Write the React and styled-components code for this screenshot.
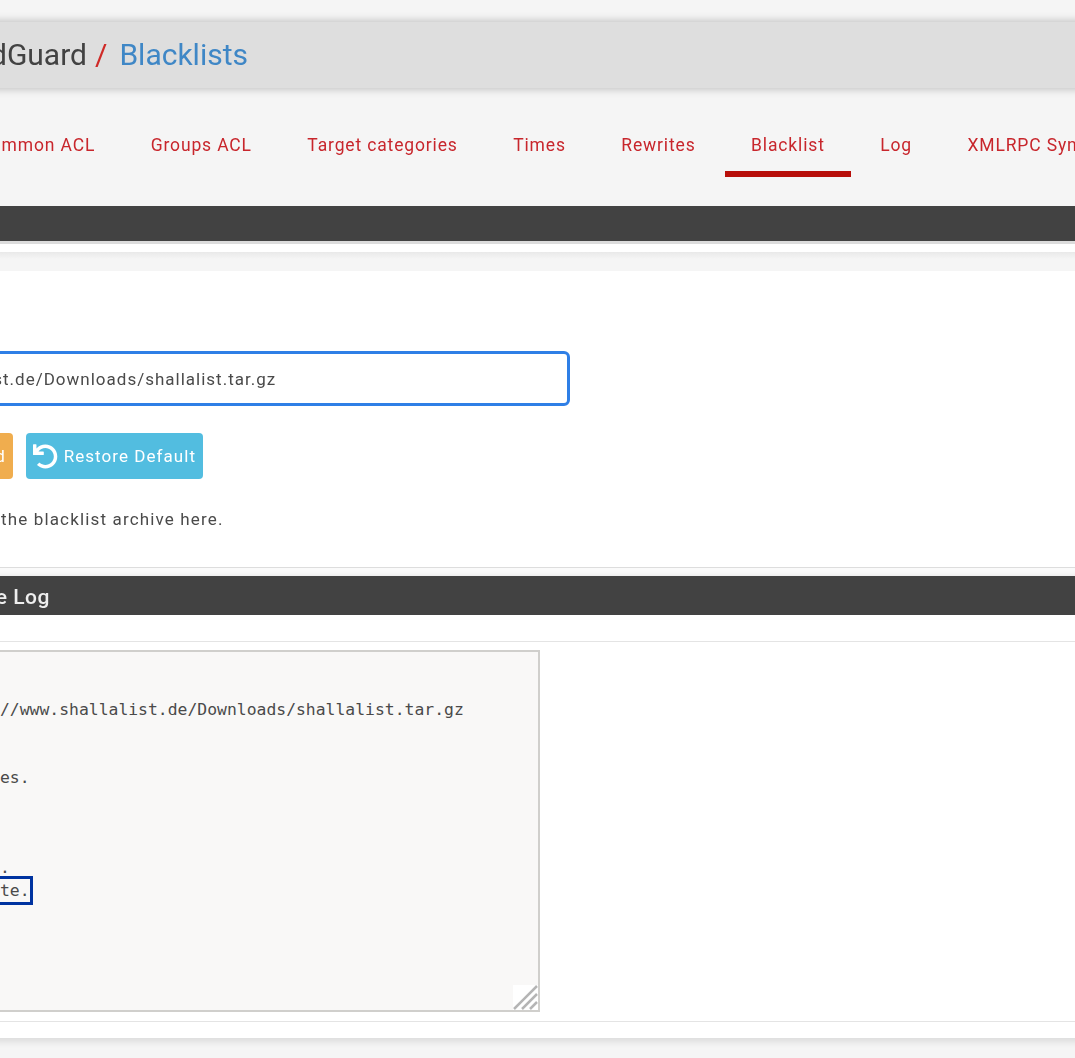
import React from "react";
import styled, { createGlobalStyle } from "styled-components";
import { FaUndo, FaDownload } from "react-icons/fa";

const tabs = [
  "General settings",
  "Common ACL",
  "Groups ACL",
  "Target categories",
  "Times",
  "Rewrites",
  "Blacklist",
  "Log",
  "XMLRPC Sync",
];

const logLines = [
  "",
  "Begin blacklist update",
  "Download archive: http://www.shallalist.de/Downloads/shallalist.tar.gz",
  "Download complete",
  "Unpack archive",
  "Scan blacklist categories.",
  "Found 74 items",
  "Start rebuild DB",
  "Copy DB to workdir",
  "Reload the proxy server.",
];

function App() {
  return (
    <>
      <GlobalStyle />
      <Page>
        <Breadcrumb>
          <CrumbPath>Package / Proxy filter SquidGuard</CrumbPath>
          <Slash>/</Slash>
          <CrumbLink>Blacklists</CrumbLink>
        </Breadcrumb>

        <TabBar>
          {tabs.map((t) => (
            <Tab key={t} $active={t === "Blacklist"}>
              {t}
            </Tab>
          ))}
        </TabBar>

        <DarkBar />
        <Strip />

        <FormBody>
          <UrlInput readOnly value="http://www.shallalist.de/Downloads/shallalist.tar.gz" />
          <Buttons>
            <ActionButton $bg="#f0ad4e" $width="209px">
              <FaDownload size={20} />
              Download
            </ActionButton>
            <ActionButton $bg="#52bde0" $width="177px">
              <FaUndo size={25} />
              Restore Default
            </ActionButton>
          </Buttons>
          <HelpText>Enter FTP/HTTP path to the blacklist archive here.</HelpText>
        </FormBody>

        <Gap />
        <LogHeading>Blacklist Update Log</LogHeading>

        <LogBody>
          <LogInner>
            <LogBox>
              {logLines.map((l, i) => (
                <LogLine key={"log" + i}>{l}</LogLine>
              ))}
              <LogLine>
                <Highlight>Blacklist update complete.</Highlight>
              </LogLine>
              <Grip viewBox="0 0 25 25">
                <rect width="25" height="25" fill="#fff" />
                <path d="M1 24L24 1M9 24L24 9M17 24L24 17" stroke="#b5b5b5" strokeWidth="2.5" fill="none" />
              </Grip>
            </LogBox>
          </LogInner>
        </LogBody>
        <Footer />
      </Page>
    </>
  );
}

const GlobalStyle = createGlobalStyle`
  html, body {
    margin: 0;
    height: 1058px;
    overflow: hidden;
    background: #f5f5f5;
    font-family: Roboto, "Liberation Sans", sans-serif;
  }
`;

const Page = styled.div`
  width: 1500px;
  margin-left: -300px;
  padding-top: 22px;
  filter: blur(0.5px);
`;

const Breadcrumb = styled.div`
  box-sizing: border-box;
  height: 66px;
  padding-bottom: 2px;
  display: flex;
  align-items: center;
  background: #dedede;
  box-shadow: 0 0 9px rgba(0, 0, 0, 0.28);
  font-size: 30px;
  white-space: nowrap;
`;

const CrumbPath = styled.span`
  width: 387px;
  display: flex;
  justify-content: flex-end;
  color: #424242;
`;

const Slash = styled.span`
  margin-left: 8px;
  color: #cf2a27;
`;

const CrumbLink = styled.span`
  margin-left: 12px;
  color: #3f87c6;
`;

const TabBar = styled.nav`
  display: flex;
  gap: 3.5px;
  padding: 29px 0 29px 57px;
  white-space: nowrap;
`;

const Tab = styled.a`
  flex: none;
  padding: 17px 26px 15px;
  line-height: 22px;
  font-size: 17.5px;
  letter-spacing: 0.85px;
  color: #c8262c;
  border-bottom: 6px solid ${(p) => (p.$active ? "#b80f0a" : "transparent")};
`;

const DarkBar = styled.div`
  height: 35px;
  background: #424242;
  border-bottom: 3px solid #dcdcdc;
`;

const Strip = styled.div`
  box-sizing: border-box;
  height: 27px;
  border-top: 8px solid #fff;
  background: linear-gradient(#e9e9e9, #f5f5f5 7px);
`;

const FormBody = styled.section`
  height: 216px;
  padding: 80px 0 0 104px;
  background: #fff;
  border-bottom: 1px solid #ddd;
`;

const UrlInput = styled.input`
  display: block;
  box-sizing: border-box;
  width: 766px;
  height: 55px;
  padding: 0 14px 0 26px;
  border: 3px solid #2f7fe6;
  border-radius: 6px;
  outline: none;
  font-family: Roboto, sans-serif;
  font-size: 17px;
  letter-spacing: 1px;
  color: #4a4a4a;
`;

const Buttons = styled.div`
  display: flex;
  gap: 13px;
  margin-top: 27px;
`;

const ActionButton = styled.button`
  display: flex;
  align-items: center;
  justify-content: flex-end;
  gap: 6px;
  box-sizing: border-box;
  width: ${(p) => p.$width};
  height: 46px;
  padding: 0 7px;
  border: 0;
  border-radius: 4px;
  background: ${(p) => p.$bg};
  color: #fff;
  font-family: Roboto, sans-serif;
  font-size: 17px;
  letter-spacing: 1.05px;
  white-space: nowrap;
`;

const HelpText = styled.p`
  margin: 28px 0 0 -15px;
  line-height: 24px;
  font-size: 17px;
  letter-spacing: 1.15px;
  color: #4a4a4a;
`;

const Gap = styled.div`
  height: 8px;
  background: #fafafa;
`;

const LogHeading = styled.h2`
  box-sizing: border-box;
  height: 39px;
  margin: 0;
  padding-left: 147px;
  line-height: 42px;
  background: #424242;
  color: #eee;
  font-size: 21px;
  font-weight: 500;
  letter-spacing: 0.5px;
  box-shadow: 0 3px 8px rgba(0, 0, 0, 0.2);
`;

const LogBody = styled.section`
  box-sizing: border-box;
  height: 423px;
  padding-top: 26px;
  background: #fff;
`;

const LogInner = styled.div`
  box-sizing: border-box;
  height: 381px;
  padding: 8px 0 0 60px;
  border-top: 1px solid #e4e4e4;
  border-bottom: 1px solid #e4e4e4;
`;

const LogBox = styled.div`
  position: relative;
  box-sizing: border-box;
  width: 780px;
  height: 362px;
  padding: 2px 0 0 11px;
  background: #f9f8f7;
  border: 2px solid #d0cfcc;
  font-family: "DejaVu Sans Mono", monospace;
  font-size: 16.4px;
  line-height: 22.6px;
  color: #4a4a4a;
`;

const LogLine = styled.div`
  height: 22.6px;
  white-space: pre;
`;

const Highlight = styled.span`
  padding: 2px 0 2px 2px;
  margin: 0 -3px 0 -5px;
  border: 3px solid #0033a0;
`;

const Grip = styled.svg`
  position: absolute;
  right: 0;
  bottom: 0;
  width: 25px;
  height: 25px;
`;

const Footer = styled.div`
  height: 20px;
  box-shadow: inset 0 8px 7px -4px rgba(0, 0, 0, 0.1);
`;

export default App;
